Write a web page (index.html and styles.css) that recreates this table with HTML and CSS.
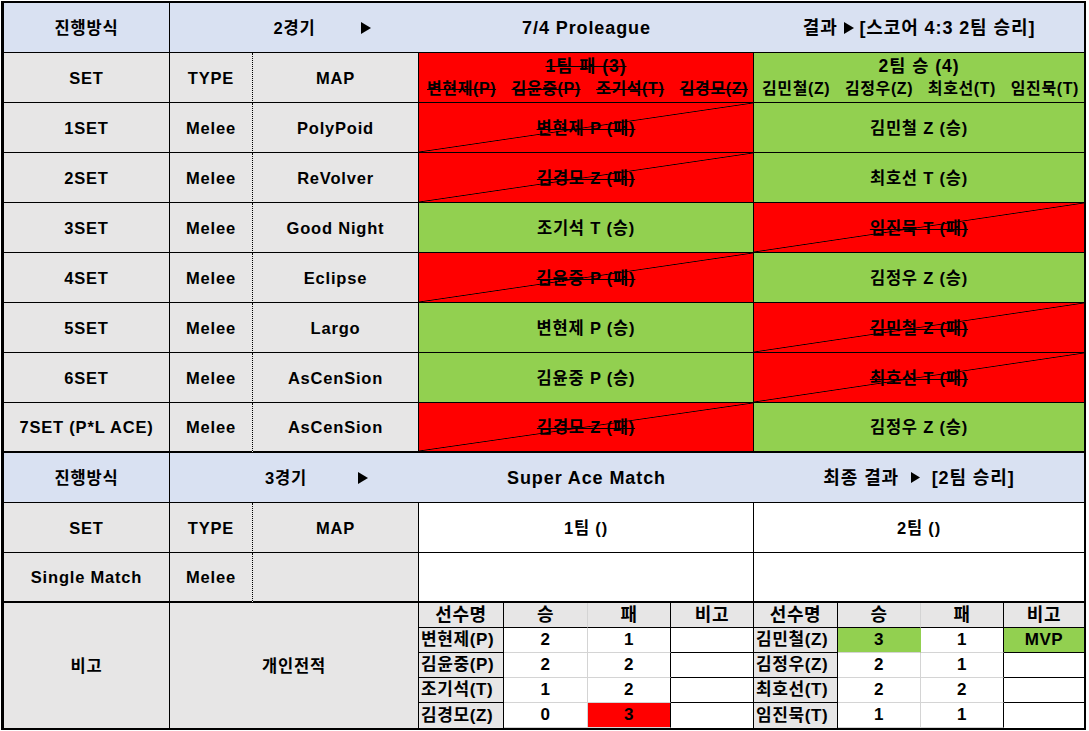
FILE: index.html
```html
<!DOCTYPE html>
<html lang="ko">
<head>
<meta charset="utf-8">
<title>Proleague</title>
<link rel="stylesheet" href="styles.css">
</head>
<body>
<div class="sheet">
  <!-- Section 1 header -->
  <div class="c blue">진행방식</div>
  <div class="c blue nob span2 game"><span></span><span>2경기</span><span class="arr"><svg width="10" height="12" viewBox="0 0 10 12"><polygon points="0,0 10,6 0,12"/></svg></span></div>
  <div class="c blue big nob span4">7/4 Proleague</div>
  <div class="c blue big nob span4 last">결과&nbsp;<svg class="tri" width="10" height="12" viewBox="0 0 10 12"><polygon points="0,0 10,6 0,12"/></svg>&nbsp;[스코어 4:3 2팀 승리]</div>

  <div class="c gray">SET</div>
  <div class="c gray dot">TYPE</div>
  <div class="c gray">MAP</div>
  <div class="c red span4 team">
    <div class="t strike">1팀 패 (3)</div>
    <div class="names"><span class="strike">변현제(P)</span><span class="strike">김윤중(P)</span><span class="strike">조기석(T)</span><span class="strike">김경모(Z)</span></div>
  </div>
  <div class="c green span4 team last">
    <div class="t">2팀 승 (4)</div>
    <div class="names"><span>김민철(Z)</span><span>김정우(Z)</span><span>최호선(T)</span><span>임진묵(T)</span></div>
  </div>

  <div class="c gray">1SET</div><div class="c gray dot">Melee</div><div class="c gray">PolyPoid</div>
  <div class="c red diag span4"><span class="strike">변현제 P (패)</span></div>
  <div class="c green span4 last">김민철 Z (승)</div>

  <div class="c gray">2SET</div><div class="c gray dot">Melee</div><div class="c gray">ReVolver</div>
  <div class="c red diag span4"><span class="strike">김경모 Z (패)</span></div>
  <div class="c green span4 last">최호선 T (승)</div>

  <div class="c gray">3SET</div><div class="c gray dot">Melee</div><div class="c gray">Good Night</div>
  <div class="c green span4">조기석 T (승)</div>
  <div class="c red diag span4 last"><span class="strike">임진묵 T (패)</span></div>

  <div class="c gray">4SET</div><div class="c gray dot">Melee</div><div class="c gray">Eclipse</div>
  <div class="c red diag span4"><span class="strike">김윤중 P (패)</span></div>
  <div class="c green span4 last">김정우 Z (승)</div>

  <div class="c gray">5SET</div><div class="c gray dot">Melee</div><div class="c gray">Largo</div>
  <div class="c green span4">변현제 P (승)</div>
  <div class="c red diag span4 last"><span class="strike">김민철 Z (패)</span></div>

  <div class="c gray">6SET</div><div class="c gray dot">Melee</div><div class="c gray">AsCenSion</div>
  <div class="c green span4">김윤중 P (승)</div>
  <div class="c red diag span4 last"><span class="strike">최호선 T (패)</span></div>

  <div class="c gray thick">7SET (P*L ACE)</div><div class="c gray dot thick">Melee</div><div class="c gray thick">AsCenSion</div>
  <div class="c red diag span4 thick"><span class="strike">김경모 Z (패)</span></div>
  <div class="c green span4 last thick">김정우 Z (승)</div>

  <!-- Section 2 header -->
  <div class="c blue">진행방식</div>
  <div class="c blue nob span2 game game2"><span></span><span>3경기</span><span class="arr"><svg width="10" height="12" viewBox="0 0 10 12"><polygon points="0,0 10,6 0,12"/></svg></span></div>
  <div class="c blue big nob span4">Super Ace Match</div>
  <div class="c blue big nob span4 last">최종 결과&nbsp;&nbsp;<svg class="tri" width="9" height="11" viewBox="0 0 10 12"><polygon points="0,0 10,6 0,12"/></svg>&nbsp;&nbsp;[2팀 승리]</div>

  <div class="c gray">SET</div>
  <div class="c gray dot">TYPE</div>
  <div class="c gray">MAP</div>
  <div class="c white span4">1팀 ()</div>
  <div class="c white span4 last">2팀 ()</div>

  <div class="c gray thick">Single Match</div>
  <div class="c gray dot thick">Melee</div>
  <div class="c gray thick"></div>
  <div class="c white span4 thick"></div>
  <div class="c white span4 last thick"></div>

  <!-- Stats -->
  <div class="c gray tall nobot">비고</div>
  <div class="c gray tall span2 nobot">개인전적</div>

  <div class="c gray s nm hd">선수명</div><div class="c gray s w hd">승</div><div class="c gray s l hd">패</div><div class="c gray s nt hd">비고</div>
  <div class="c gray s nm hd">선수명</div><div class="c gray s w hd">승</div><div class="c gray s l hd">패</div><div class="c gray s nt hd last">비고</div>

  <div class="c gray s nm">변현제(P)</div><div class="c s w">2</div><div class="c s l">1</div><div class="c s nt"></div>
  <div class="c gray s nm">김민철(Z)</div><div class="c s w green">3</div><div class="c s l">1</div><div class="c s nt green last">MVP</div>

  <div class="c gray s nm">김윤중(P)</div><div class="c s w">2</div><div class="c s l">2</div><div class="c s nt"></div>
  <div class="c gray s nm">김정우(Z)</div><div class="c s w">2</div><div class="c s l">1</div><div class="c s nt last"></div>

  <div class="c gray s nm">조기석(T)</div><div class="c s w">1</div><div class="c s l">2</div><div class="c s nt"></div>
  <div class="c gray s nm">최호선(T)</div><div class="c s w">2</div><div class="c s l">2</div><div class="c s nt last"></div>

  <div class="c gray s nm nobot">김경모(Z)</div><div class="c s w nobot">0</div><div class="c s l red nobot">3</div><div class="c s nt nobot"></div>
  <div class="c gray s nm nobot">임진묵(T)</div><div class="c s w nobot">1</div><div class="c s l nobot">1</div><div class="c s nt last nobot"></div>
</div>
</body>
</html>
```

FILE: styles.css
```css
html, body {
  margin: 0;
  padding: 0;
  background: #ffffff;
}

.sheet {
  display: grid;
  grid-template-columns: 166px 83px 166px 85px 84px 83px 83px 84px 83px 83px 80px;
  grid-template-rows: repeat(12, 50px) repeat(5, 25px);
  width: max-content;
  margin: 1px 0 0 1px;
  border-style: solid;
  border-color: #000;
  border-width: 2px 2px 2px 3px;
  font-family: "Liberation Sans", "Noto Sans CJK KR", sans-serif;
  font-weight: bold;
  font-size: 16.5px;
  letter-spacing: 0.8px;
  line-height: 20px;
  color: #000;
}

.c {
  box-sizing: border-box;
  display: flex;
  align-items: center;
  justify-content: center;
  border-right: 1px solid #000;
  border-bottom: 1px solid #000;
  white-space: nowrap;
  overflow: hidden;
  min-width: 0;
}

.blue { background: #d9e1f2; }
.gray { background: #e7e6e6; }
.red { background: #ff0000; }
.green { background: #92d050; }
.white { background: #ffffff; }

.big {
  font-size: 18px;
  letter-spacing: 0.9px;
}

.nob { border-right: none; }
.last { border-right: none; }
.dot { border-right: 1px dotted #000; }
.thick { border-bottom: 2px solid #000; }
.nobot { border-bottom: none; }

.span2 { grid-column: span 2; }
.span4 { grid-column: span 4; }
.tall { grid-row: span 5; }

.game {
  display: grid;
  grid-template-columns: 1fr auto 1fr;
  align-items: center;
}
.game2 { padding-right: 17px; }
.arr {
  justify-self: start;
  margin-left: 46px;
  display: flex;
  align-items: center;
}
.game2 .arr { margin-left: 51px; }
.tri { display: inline-block; }

.team {
  flex-direction: column;
  gap: 3px;
}
.team .t {
  height: 20px;
  font-size: 17.5px;
  letter-spacing: 1px;
}
.names {
  width: 100%;
  box-sizing: border-box;
  display: flex;
  justify-content: space-between;
  padding: 0 5px 0 8px;
  font-size: 16px;
  letter-spacing: 0.6px;
}

.strike {
  text-decoration: line-through;
  text-decoration-thickness: 1px;
}

.diag {
  background:
    linear-gradient(to bottom right,
      rgba(0,0,0,0) calc(50% - 0.8px),
      #000 50%,
      rgba(0,0,0,0) calc(50% + 0.8px)),
    #ff0000;
}

/* stats table */
.s {
  font-size: 17px;
  letter-spacing: 0.6px;
}
.s.hd { font-size: 18px; }
.nm { justify-content: flex-start; padding-left: 2px; }
.nm.hd { justify-content: center; padding-left: 0; }
.w { border-right: 1px solid #d4d4d4; border-bottom: 1px solid #d4d4d4; }
.l { border-bottom: 1px solid #d4d4d4; }
.hd { border-bottom: 1px solid #000; }
.w.hd { border-bottom: 1px solid #000; }
.l.hd { border-bottom: 1px solid #000; }
.green.w { border-right-color: #92d050; }
```
